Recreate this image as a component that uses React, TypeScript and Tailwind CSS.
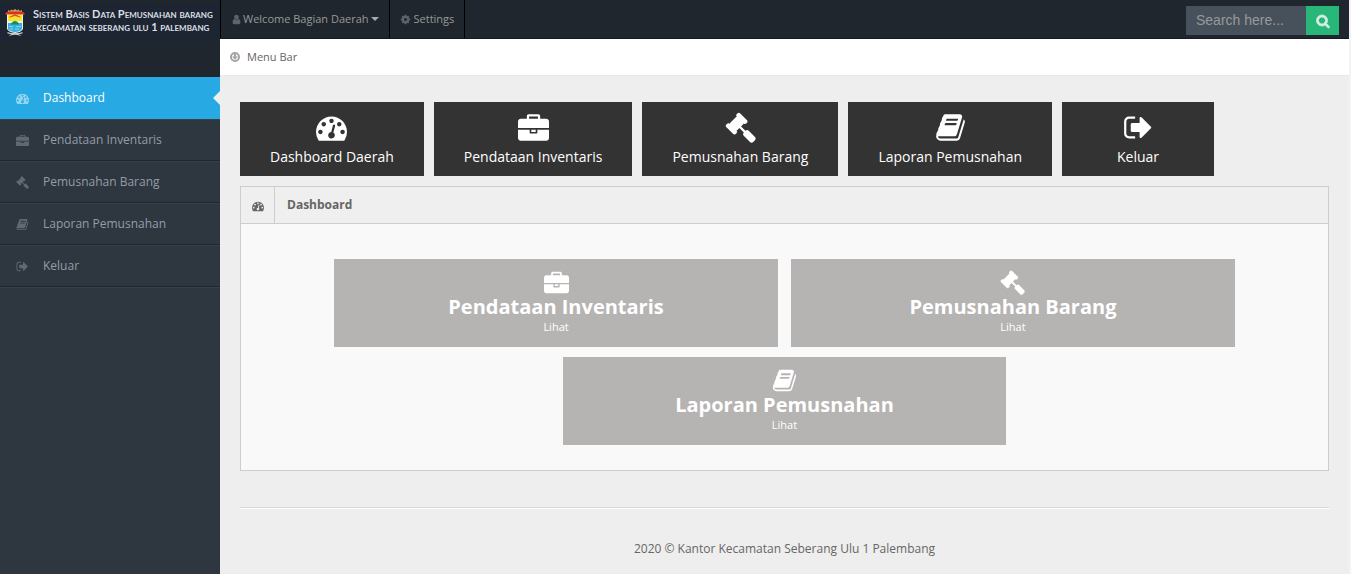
import React from "react";

const paths = {
  dashboard:
    "M384 1152q0-53-37.5-90.5t-90.5-37.5-90.5 37.5-37.5 90.5 37.5 90.5 90.5 37.5 90.5-37.5 37.5-90.5zm192-448q0-53-37.5-90.5t-90.5-37.5-90.5 37.5-37.5 90.5 37.5 90.5 90.5 37.5 90.5-37.5 37.5-90.5zm428 481l101-382q6-26-7.5-48.5t-38.5-29.5-48 6.5-30 39.5l-101 382q-60 5-107 43.5t-63 98.5q-20 77 20 146t117 89 146-20 89-117q16-60-6-117t-72-91zm660-33q0-53-37.5-90.5t-90.5-37.5-90.5 37.5-37.5 90.5 37.5 90.5 90.5 37.5 90.5-37.5 37.5-90.5zm-640-640q0-53-37.5-90.5t-90.5-37.5-90.5 37.5-37.5 90.5 37.5 90.5 90.5 37.5 90.5-37.5 37.5-90.5zm448 192q0-53-37.5-90.5t-90.5-37.5-90.5 37.5-37.5 90.5 37.5 90.5 90.5 37.5 90.5-37.5 37.5-90.5zm320 448q0 261-141 483-19 29-54 29h-1402q-35 0-54-29-141-221-141-483 0-182 71-348t191-286 286-191 348-71 348 71 286 191 191 286 71 348z",
  briefcase:
    "M640 384h512v-128h-512v128zm1152 640v480q0 66-47 113t-113 47h-1472q-66 0-113-47t-47-113v-480h672v160q0 26 19 45t45 19h320q26 0 45-19t19-45v-160h672zm-768 0v128h-256v-128h256zm768-480v384h-1792v-384q0-66 47-113t113-47h352v-160q0-40 28-68t68-28h576q40 0 68 28t28 68v160h352q66 0 113 47t47 113z",
  gavel:
    "M1771 1536q0 53-37 90l-107 108q-39 37-91 37-53 0-90-37l-363-364q-38-36-38-90 0-53 43-96l-256-256-126 126q-14 14-34 14t-34-14q2 2 12.5 12t12.5 13 10 11.5 10 13.5 6 13.5 5.5 16.5 1.5 18q0 38-28 68-3 3-16.5 18t-19 20.5-18.5 16.5-22 15.5-22 9-26 4.5q-40 0-68-28l-408-408q-28-28-28-68 0-13 4.5-26t9-22 15.5-22 16.5-18.5 20.5-19 18-16.5q30-28 68-28 10 0 18 1.5t16.5 5.5 13.5 6 13.5 10 11.5 10 13 12.5 12 12.5q-14-14-14-34t14-34l348-348q14-14 34-14t34 14q-2-2-12.5-12t-12.5-13-10-11.5-10-13.5-6-13.5-5.5-16.5-1.5-18q0-38 28-68 3-3 16.5-18t19-20.5 18.5-16.5 22-15.5 22-9 26-4.5q40 0 68 28l408 408q28 28 28 68 0 13-4.5 26t-9 22-15.5 22-16.5 18.5-20.5 19-18 16.5q-30 28-68 28-10 0-18-1.5t-16.5-5.5-13.5-6-13.5-10-11.5-10-13-12.5-12-12.5q14 14 14 34t-14 34l-126 126 256 256q43-43 96-43 52 0 91 37l363 363q37 39 37 91z",
  book: "M1703 478q40 57 18 129l-275 906q-19 64-76.5 107.5t-122.5 43.5h-923q-77 0-148.5-53.5t-99.5-131.5q-24-67-2-127 0-4 3-27t4-37q1-8-3-21.5t-3-19.5q2-11 8-21t16.5-23.5 16.5-23.5q23-38 45-91.5t30-91.5q3-10 .5-30t-.5-28q3-11 17-28t17-23q21-36 42-92t25-90q1-9-2.5-32t.5-28q4-13 22-30.5t22-22.5q19-26 42.5-84.5t27.5-96.5q1-8-3-25.5t-2-26.5q2-8 9-18t18-23 17-21q8-12 16.5-30.5t15-35 16-36 19.5-32 26.5-23.5 36-11.5 47.5 5.5l-1 3q38-9 51-9h761q74 0 114 56t18 130l-274 906q-36 119-71.5 153.5t-128.5 34.5h-869q-27 0-38 15-11 16-1 43 24 70 144 70h923q29 0 56-15.5t35-41.5l300-987q7-22 5-57 38 15 59 43zm-1064 2q-4 13 2 22.5t20 9.5h608q13 0 25.5-9.5t16.5-22.5l21-64q4-13-2-22.5t-20-9.5h-608q-13 0-25.5 9.5t-16.5 22.5zm-83 256q-4 13 2 22.5t20 9.5h608q13 0 25.5-9.5t16.5-22.5l21-64q4-13-2-22.5t-20-9.5h-608q-13 0-25.5 9.5t-16.5 22.5z",
  signOut:
    "M704 1440q0 4 1 20t.5 26.5-3 23.5-10 19.5-20.5 6.5h-320q-119 0-203.5-84.5t-84.5-203.5v-704q0-119 84.5-203.5t203.5-84.5h320q13 0 22.5 9.5t9.5 22.5q0 4 1 20t.5 26.5-3 23.5-10 19.5-20.5 6.5h-320q-66 0-113 47t-47 113v704q0 66 47 113t113 47h312l11.5 1 11.5 3 8 5.5 7 9 2 13.5zm928-544q0 26-19 45l-544 544q-19 19-45 19t-45-19-19-45v-288h-448q-26 0-45-19t-19-45v-384q0-26 19-45t45-19h448v-288q0-26 19-45t45-19 45 19l544 544q19 19 19 45z",
  user: "M1536 1399q0 109-62.5 187t-150.5 78h-854q-88 0-150.5-78t-62.5-187q0-85 8.5-160.5t31.5-152 58.5-131 94-89 134.5-34.5q131 128 313 128t313-128q76 0 134.5 34.5t94 89 58.5 131 31.5 152 8.5 160.5zm-256-887q0 159-112.5 271.5t-271.5 112.5-271.5-112.5-112.5-271.5 112.5-271.5 271.5-112.5 271.5 112.5 112.5 271.5z",
  cog: "M1152 896q0-106-75-181t-181-75-181 75-75 181 75 181 181 75 181-75 75-181zm512-109v222q0 12-8 23t-20 13l-185 28q-19 54-39 91 35 50 107 138 10 12 10 25t-9 23q-27 37-99 108t-94 71q-12 0-26-9l-138-108q-44 23-91 38-16 136-29 186-7 28-36 28h-222q-14 0-24.5-8.5t-11.5-21.5l-28-184q-49-16-90-37l-141 107q-10 9-25 9-14 0-25-11-126-114-165-168-7-10-7-23 0-12 8-23 15-21 51-66.5t54-70.5q-27-50-41-99l-183-27q-13-2-21-12.5t-8-23.5v-222q0-12 8-23t19-13l186-28q14-46 39-92-40-57-107-138-10-12-10-24 0-10 9-23 26-36 98.5-107.5t94.5-71.5q13 0 26 10l138 107q44-23 91-38 16-136 29-186 7-28 36-28h222q14 0 24.5 8.5t11.5 21.5l28 184q49 16 90 37l142-107q9-9 24-9 13 0 25 10 129 119 165 170 7 8 7 22 0 12-8 23-15 21-51 66.5t-54 70.5q26 50 41 98l183 28q13 2 21 12.5t8 23.5z",
  search:
    "M1216 832q0-185-131.5-316.5t-316.5-131.5-316.5 131.5-131.5 316.5 131.5 316.5 316.5 131.5 316.5-131.5 131.5-316.5zm512 832q0 52-38 90t-90 38q-54 0-90-38l-343-342q-179 124-399 124-143 0-273.5-55.5t-225-150-150-225-55.5-273.5 55.5-273.5 150-225 225-150 273.5-55.5 273.5 55.5 225 150 150 225 55.5 273.5q0 220-124 399l343 343q37 37 37 90z",
};

type IconName = keyof typeof paths;

function Icon({ name, className }: { name: IconName; className: string }) {
  return (
    <svg viewBox="0 0 1792 1792" fill="currentColor" aria-hidden="true" className={`shrink-0 overflow-visible ${className}`}>
      <path d={paths[name]} />
    </svg>
  );
}

function Crest() {
  return (
    <svg viewBox="0 0 20 27" aria-hidden="true" className="h-[27px] w-5 shrink-0">
      <path d="M3 3V1l2 1 1.500-1.500L8 1.500 10 0l2 1.500L13.500.5 15 2l2-1v2z" fill="#d9a45a" />
      <path d="M0 5 1.500 3 5 2.500h10l3.500.5L20 5l-1.500 1h-17z" fill="#d6351c" />
      <path d="M2 5.500h16V20q-2 3.500-8 4-6-.5-8-4z" fill="#f4f3d6" />
      <path d="M3 6h14v6H3z" fill="#f8e32c" />
      <path d="M4 8 10 5l6 3-1 .5-5-1.500-5 1.500z" fill="#e0561f" />
      <path d="M3 12h14v2H3z" fill="#f2f4df" />
      <path d="M3 14h14v6q-2 2.500-7 3-5-.5-7-3z" fill="#35aee0" />
      <path d="M6 15.500q1-3.500 4-3.500t4 3.500z" fill="#17914f" />
      <path d="M4 17.500h4m3 0h5M5 20h3m2 0h4" stroke="#8fd2f0" strokeWidth="1" />
      <path d="M2.500 23q3 1.500 7.500.8 4.500.7 7.500-.8v1.500l-4 .8 3.500 1.500-7-1-7 1 3.500-1.500-4-.8z" fill="#c4c8cc" />
    </svg>
  );
}

const navItems: { label: string; icon: IconName }[] = [
  { label: "Pendataan Inventaris", icon: "briefcase" },
  { label: "Pemusnahan Barang", icon: "gavel" },
  { label: "Laporan Pemusnahan", icon: "book" },
  { label: "Keluar", icon: "signOut" },
];

const shortcuts: { label: string; icon: IconName }[] = [
  { label: "Dashboard Daerah", icon: "dashboard" },
  ...navItems,
];

function Sidebar() {
  return (
    <aside className="flex w-[220px] shrink-0 flex-col bg-[#2e363f]">
      <div className="h-[77px] bg-[#1f262d] pt-1">
        <a href="#" className="flex h-9 items-center gap-2 bg-[#1c2531] pl-[5px] font-['Lato',sans-serif] text-[11px] leading-[13px] font-bold text-[#dcdfe3]">
          <Crest />
          <span className="flex flex-col items-center pb-1 whitespace-nowrap [font-variant-caps:small-caps]">
            <span>Sistem Basis Data Pemusnahan barang</span>
            <span>kecamatan seberang ulu 1 palembang</span>
          </span>
        </a>
      </div>
      <nav>
        <a href="#" className="relative flex h-[42px] items-center bg-[#27a9e3] pl-4 text-white">
          <Icon name="dashboard" className="h-[13px] w-[13px] opacity-50" />
          <span className="pl-[14px]">Dashboard</span>
          <svg viewBox="0 0 7 14" aria-hidden="true" className="absolute top-[14px] right-0 h-[14px] w-[7px]">
            <path d="M7 0v14L0 7z" fill="#eeeeee" />
          </svg>
        </a>
        {navItems.map((item) => (
          <a
            key={item.label}
            href="#"
            className="flex h-[42px] items-center border-t border-b border-t-[#37414b] border-b-[#1f262d] pl-4 text-[#939da8]"
          >
            <Icon name={item.icon} className="h-[13px] w-[13px] opacity-50" />
            <span className="pl-[14px]">{item.label}</span>
          </a>
        ))}
        <div className="h-px bg-[#37414b]" />
      </nav>
    </aside>
  );
}

function TopBar() {
  return (
    <header className="flex h-[39px] items-start justify-between border-b border-[#151a24] bg-[#1f262d] pr-[10px]">
      <div className="flex h-full border-l border-black text-[11px] text-[#999999]">
        <a href="#" className="flex items-center border-r border-black px-[10px]">
          <Icon name="user" className="mr-px h-[11px] w-[11px] text-[#5f6468]" />
          Welcome Bagian Daerah
          <svg viewBox="0 0 8 4" aria-hidden="true" className="ml-0.5 h-1 w-2">
            <path d="M0 0h8L4 4z" fill="#aaaaaa" />
          </svg>
        </a>
        <a href="#" className="flex items-center border-r border-black px-[10px]">
          <Icon name="cog" className="mr-[3px] h-[11px] w-[11px] text-[#5f6468]" />
          Settings
        </a>
      </div>
      <form className="mt-1.5 flex h-[29px]">
        <input
          type="text"
          aria-label="Search"
          placeholder="Search here..."
          className="w-[120px] bg-[#47515b] px-[10px] pb-0.5 font-['Liberation_Sans',Arial,sans-serif] text-sm text-white placeholder:text-[#999999] placeholder:opacity-100"
        />
        <button type="button" aria-label="Submit search" className="flex w-[33px] items-center justify-center bg-[#28b779] text-white">
          <Icon name="search" className="h-[14px] w-[14px] stroke-current stroke-[100px] opacity-80" />
        </button>
      </form>
    </header>
  );
}

function Card({ label, icon }: { label: string; icon: IconName }) {
  return (
    <a href="#" className="flex h-[88px] w-[42.4%] flex-col items-center bg-[#b6b3b3] pt-[11px] text-white">
      <Icon name={icon} className="h-[25px] w-[25px]" />
      <span className="text-xl leading-6 font-bold">{label}</span>
      <span className="text-[11px] leading-4">Lihat</span>
    </a>
  );
}

export default function App() {
  return (
    <div className="flex min-h-screen bg-[#f3f3f3] pr-0.5 font-['Open_Sans',sans-serif] text-xs leading-5 text-[#666666]">
      <Sidebar />
      <div className="flex min-w-0 grow flex-col bg-[#eeeeee]">
        <TopBar />
        <div className="flex h-[37px] items-center border-b border-[#e3ebeb] bg-white pl-[10px] text-[11px]">
          <a href="#" className="flex items-center gap-[7px]">
            <svg viewBox="0 0 10 10" aria-hidden="true" className="h-[10px] w-[10px]">
              <circle cx="5" cy="5" r="4" fill="none" stroke="#a4a4a4" strokeWidth="2" />
              <path d="M4 2h2v2.500h2L5 7.800 2 4.500h2z" fill="#a4a4a4" />
            </svg>
            Menu Bar
          </a>
        </div>
        <main className="px-5 pt-[26px]">
          <div className="flex flex-wrap gap-[10px]">
            {shortcuts.map((item) => (
              <a
                key={item.label}
                href="#"
                className={`flex h-[74px] flex-col items-center bg-[#333333] pt-[10px] text-sm text-white ${item.label === "Keluar" ? "px-[55px]" : "px-[30px]"}`}
              >
                <Icon name={item.icon} className="h-[31px] w-[31px]" />
                <span className="pt-1 leading-5">{item.label}</span>
              </a>
            ))}
          </div>
          <section className="mt-[10px] border border-[#cdcdcd] bg-[#f9f9f9]">
            <div className="flex h-[37px] border-b border-[#cdcdcd] bg-[#efefef]">
              <div className="flex w-[34px] items-center justify-center border-r border-[#cdcdcd] pt-0.5">
                <Icon name="dashboard" className="h-3 w-3" />
              </div>
              <h2 className="flex items-center px-3 text-xs font-bold">Dashboard</h2>
            </div>
            <div className="flex flex-wrap justify-center gap-x-[13px] gap-y-[10px] px-5 pt-[35px] pb-[25px]">
              <Card label="Pendataan Inventaris" icon="briefcase" />
              <Card label="Pemusnahan Barang" icon="gavel" />
              <Card label="Laporan Pemusnahan" icon="book" />
            </div>
          </section>
          <hr className="mt-9 border-t border-b border-t-[#d8d8d8] border-b-white" />
          <footer className="pt-[30px] pb-4 text-center">2020 © Kantor Kecamatan Seberang Ulu 1 Palembang</footer>
        </main>
      </div>
    </div>
  );
}
